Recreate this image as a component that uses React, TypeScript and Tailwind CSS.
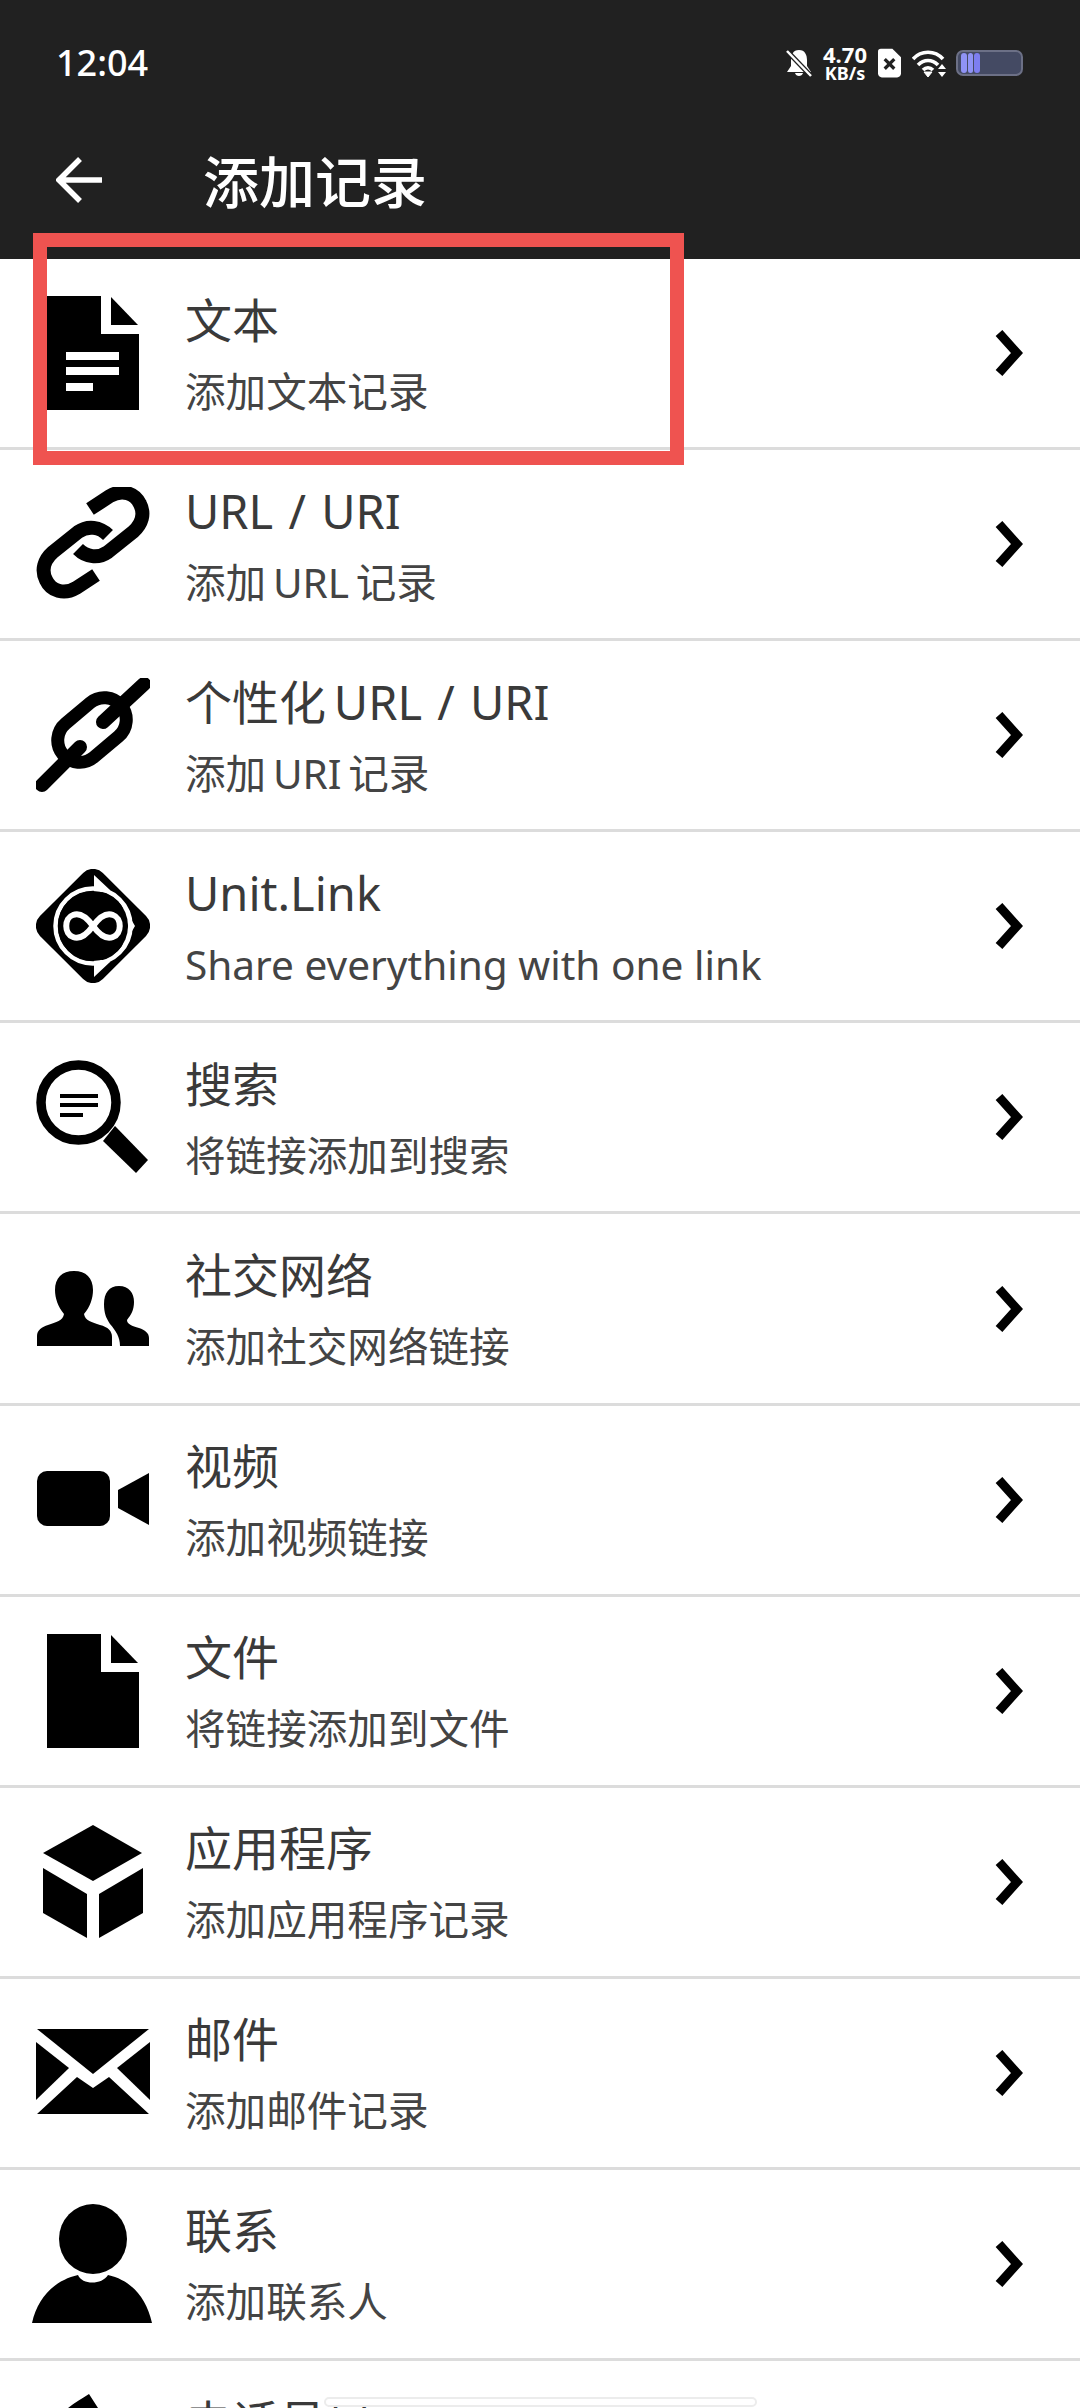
import type { ReactNode } from "react"

const cjk = "font-['Noto_Sans','Noto_Sans_CJK_SC',sans-serif]"

function DocIcon({ lines }: { lines?: boolean }) {
  return (
    <svg viewBox="0 0 114 114" className="h-[114px] w-[114px]">
      <path d="M11 0H65V38H103V114H11Z" />
      <path d="M75 1L102 29H75Z" />
      {lines && <path d="M30 56H83V64H30ZM30 71H83V79H30ZM30 87H57V95H30Z" fill="#fff" />}
    </svg>
  )
}

function LinkIcon() {
  return (
    <svg viewBox="0 2 114 114" className="h-[114px] w-[114px]" fill="none" stroke="#000" strokeWidth="14">
      <path d="M54 24L74 11C86 4 99 8 104 19C109 29 106 39 97 47L72 67C62 74 50 72 42 64" />
      <path d="M54 24L74 11C86 4 99 8 104 19C109 29 106 39 97 47L72 67C62 74 50 72 42 64" transform="rotate(180 57 57)" />
    </svg>
  )
}

function CustomLinkIcon() {
  return (
    <svg viewBox="0 0 114 114" className="h-[114px] w-[114px]" fill="none" stroke="#000" strokeLinecap="round">
      <rect x="18" y="30" width="76" height="44" rx="22" strokeWidth="13" transform="rotate(-40 56 52)" />
      <path d="M6 107L44 69M108 6L67 44" strokeWidth="14" />
    </svg>
  )
}

function UnitIcon() {
  return (
    <svg viewBox="0 0 114 114" className="h-[114px] w-[114px]">
      <rect x="12.5" y="12.5" width="89" height="89" rx="14" transform="rotate(45 57 57)" />
      <circle cx="57" cy="57" r="37.5" fill="none" stroke="#fff" strokeWidth="4.5" />
      <path d="M58 6L74 21L58 25ZM58 108L74 93L58 89ZM84 31L99 57L84 83L92 57Z" fill="#fff" />
      <circle cx="57" cy="57" r="35" />
      <path
        d="M57 57C49 46 42 44 37 46C28 49 28 65 37 68C42 70 49 68 57 57C65 46 72 44 77 46C86 49 86 65 77 68C72 70 65 68 57 57Z"
        fill="none"
        stroke="#fff"
        strokeWidth="6"
      />
    </svg>
  )
}

function SearchIcon() {
  return (
    <svg viewBox="0 0 114 114" className="h-[114px] w-[114px]">
      <circle cx="42.5" cy="42.5" r="37.5" fill="none" stroke="#000" strokeWidth="9.5" />
      <path d="M79 66L112 100L100 113L67 81Z" />
      <path d="M24 34H62V38H24ZM24 43H62V47H24ZM24 53H47V57H24Z" />
    </svg>
  )
}

function PeopleIcon() {
  return (
    <svg viewBox="0 0 114 114" className="h-[114px] w-[114px]">
      <path d="M1 94V84C1 78 6 75 12 73C20 70 27 69 28 62C22 55 19 46 19 38C19 26 26 19 38 19C50 19 57 26 57 38C57 46 54 55 48 62C49 69 56 70 64 73C72 75 76 79 76 85V94Z" />
      <path d="M84 94C84 85 80 79 74 72C70 66 68 61 68 52C68 41 73 34 83 34C93 34 98 41 98 50C98 58 95 63 91 68C91 72 96 74 103 76C109 78 113 81 113 86V94Z" />
    </svg>
  )
}

function VideoIcon() {
  return (
    <svg viewBox="0 0 114 114" className="h-[114px] w-[114px]">
      <rect x="1" y="28" width="73" height="55" rx="10" />
      <path d="M82 47L113 30V82L82 65Z" />
    </svg>
  )
}

function BoxIcon() {
  return (
    <svg viewBox="0 0 114 114" className="h-[114px] w-[114px]">
      <path d="M57 0L106 28L57 56L7 28Z" />
      <path d="M7 43L51 69V113L7 88Z" />
      <path d="M107 43L63 69V113L107 88Z" />
    </svg>
  )
}

function MailIcon() {
  return (
    <svg viewBox="0 0 114 114" className="h-[114px] w-[114px]">
      <path d="M1 13H113L57 58Z" />
      <path d="M0 26L33 52L0 84Z" />
      <path d="M114 26L81 52L114 84Z" />
      <path d="M41 61L57 72L73 61L113 98H1Z" />
    </svg>
  )
}

function PersonIcon() {
  return (
    <svg viewBox="0 0 120 120" className="-ml-[4px] h-[120px] w-[120px]">
      <ellipse cx="61" cy="35" rx="34" ry="35" />
      <path d="M46 71C50 81 70 81 76 71C98 76 114 92 120 119H0C6 92 24 76 46 71Z" />
    </svg>
  )
}

function PhoneIcon() {
  return (
    <svg viewBox="0 0 114 114" className="h-[114px] w-[114px] overflow-visible">
      <path d="M53 -4C40 4 24 14 14 28C4 44 8 62 24 80C40 98 60 112 76 110C86 108 96 100 100 92L76 72L62 80C50 72 42 62 38 50L52 38L62 10Z" />
    </svg>
  )
}

function Chevron() {
  return (
    <svg viewBox="0 0 28 46" className="h-[46px] w-[28px]" fill="none" stroke="#000" strokeWidth="9">
      <path d="M4 3L22 23L4 43" />
    </svg>
  )
}

function Row({ icon, title, sub }: { icon: ReactNode; title: string; sub: string }) {
  return (
    <div className="flex h-[191.1px] items-center border-b-[3px] border-[#dcdcdc] bg-white pr-[57px]">
      <div className="flex w-[185px] shrink-0 pl-[36px]">{icon}</div>
      <div className="min-w-0 flex-1 pt-[1px]">
        <div className="text-[47px] leading-[62px] text-[#3a3a3a] [word-spacing:3px]">{title}</div>
        <div className="mt-[14px] text-[40.6px] leading-[54px] text-[#444]">{sub}</div>
      </div>
      <Chevron />
    </div>
  )
}

const rows = [
  { icon: <DocIcon lines />, title: "文本", sub: "添加文本记录" },
  { icon: <LinkIcon />, title: "URL / URI", sub: "添加\u2009URL\u2009记录" },
  { icon: <CustomLinkIcon />, title: "个性化\u2009URL / URI", sub: "添加\u2009URI\u2009记录" },
  { icon: <UnitIcon />, title: "Unit.Link", sub: "Share everything with one link" },
  { icon: <SearchIcon />, title: "搜索", sub: "将链接添加到搜索" },
  { icon: <PeopleIcon />, title: "社交网络", sub: "添加社交网络链接" },
  { icon: <VideoIcon />, title: "视频", sub: "添加视频链接" },
  { icon: <DocIcon />, title: "文件", sub: "将链接添加到文件" },
  { icon: <BoxIcon />, title: "应用程序", sub: "添加应用程序记录" },
  { icon: <MailIcon />, title: "邮件", sub: "添加邮件记录" },
  { icon: <PersonIcon />, title: "联系", sub: "添加联系人" },
  { icon: <PhoneIcon />, title: "电话号码", sub: "添加电话号码" },
]

export default function App() {
  return (
    <div className={`relative h-[2408px] w-[1080px] overflow-hidden bg-white ${cjk}`}>
      {/* Header */}
      <header className="h-[259px] bg-[#212121] text-white">
        <div className="flex h-[126px] items-center justify-between pl-[56px] pr-[57px]">
          <span className="text-[36px] font-medium">12:04</span>
          <div className="flex items-center gap-[11px]">
            <svg viewBox="0 0 26 28" className="h-[28px] w-[26px]" fill="#fff">
              <path d="M13 1C7 1 5 6 5 11V17L1 23H25L21 17V11C21 6 19 1 13 1ZM9 24H17C16 28 10 28 9 24Z" />
              <path d="M1 2L25 27" stroke="#212121" strokeWidth="5" />
              <path d="M1 2L25 27" stroke="#fff" strokeWidth="2.5" />
            </svg>
            <div className="flex w-[44px] flex-col items-center font-bold">
              <span className="text-[22px] leading-[20px]">4.70</span>
              <span className="text-[18px] leading-[19px]">KB/s</span>
            </div>
            <svg viewBox="0 0 24 30" className="h-[30px] w-[23px]">
              <path d="M3 0H15L24 9V26C24 28 22 30 20 30H4C2 30 0 28 0 26V3C0 1 1 0 3 0Z" fill="#fff" />
              <path d="M7 11L17 21M17 11L7 21" stroke="#212121" strokeWidth="3.4" />
            </svg>
            <svg viewBox="0 0 35 28" className="mr-[-2px] h-[28px] w-[35px]" fill="none" stroke="#fff" strokeWidth="3.6">
              <path d="M1 10C9 1 23 1 31 10M6 16C12 10 20 10 26 16M11 21C14 18 18 18 21 21" />
              <path d="M12 23L16 28L20 23Z" fill="#fff" strokeWidth="1" />
              <path d="M26 20L30 15L34 20ZM26 23L30 28L34 23Z" fill="#fff" stroke="none" />
            </svg>
            <div className="flex h-[26px] w-[67px] items-center overflow-hidden rounded-[7px] border-[2px] border-[#6c7086] bg-[#444a63]">
              <div className="ml-[3px] flex h-[20px] gap-[1px]">
                <div className="w-[6px] rounded-[3px] bg-[#8f93f5]" />
                <div className="w-[5px] rounded-[3px] bg-[#8f93f5]" />
                <div className="w-[6px] rounded-[3px] bg-[#7d7ef0]" />
              </div>
            </div>
          </div>
        </div>
        <div className="flex h-[108px] items-center pl-[56px]">
          <svg viewBox="0 0 46 46" className="h-[46px] w-[46px]" fill="none" stroke="#fff" strokeWidth="5.5">
            <path d="M24 2L3 23L24 44M3 23H46" />
          </svg>
          <h1 className="ml-[101px] mt-[2px] text-[56px] font-medium leading-none">添加记录</h1>
        </div>
      </header>

      {rows.map((row) => (
        <Row key={row.title} icon={row.icon} title={row.title} sub={row.sub} />
      ))}

      {/* Highlight box drawn on top of the first row */}
      <div className="absolute left-[33px] top-[233px] h-[232px] w-[651px] border-[14px] border-[#ef5350]" />

      {/* Floating bar near the bottom edge */}
      <div className="absolute left-[324px] top-[2397px] h-[10px] w-[433px] rounded-[5px] border-2 border-[#ececec] bg-white" />
    </div>
  )
}
